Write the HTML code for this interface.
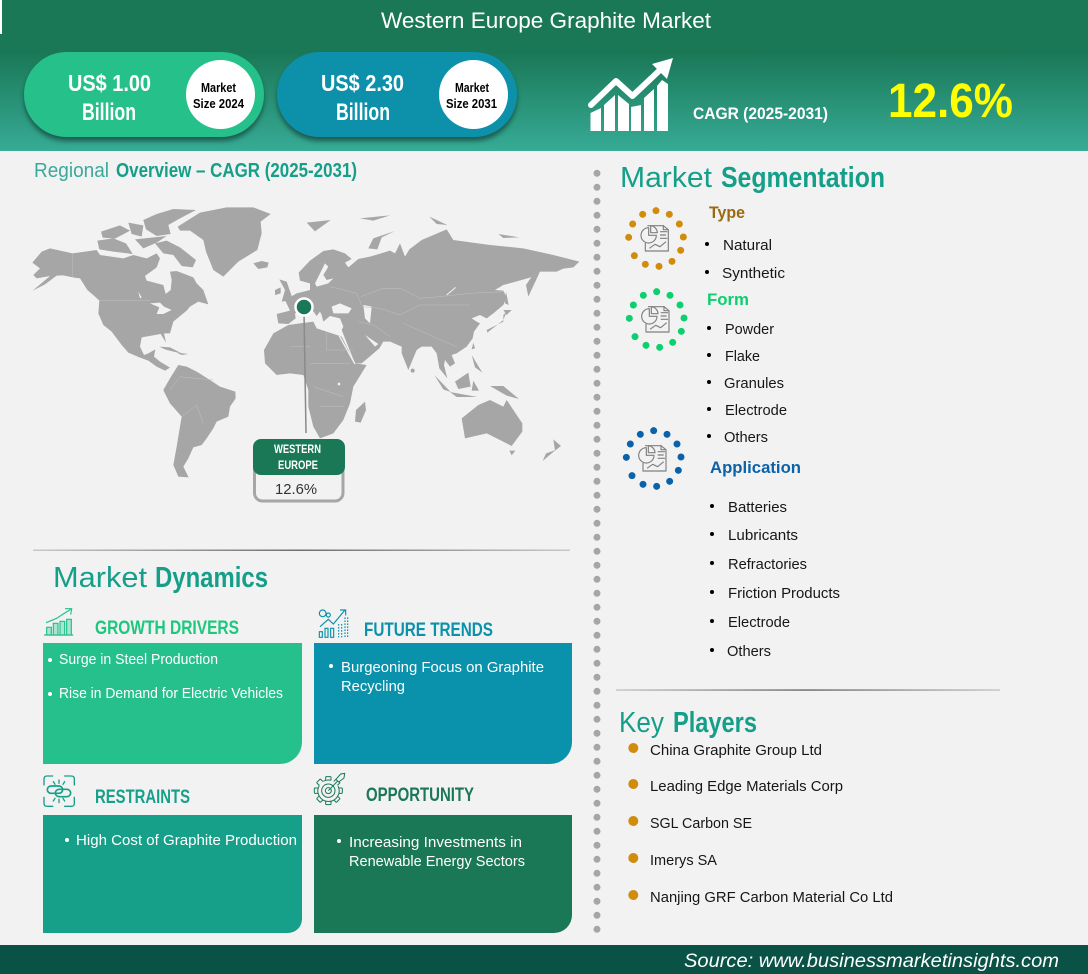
<!DOCTYPE html>
<html lang="en"><head><meta charset="utf-8"><title>Western Europe Graphite Market</title>
<style>
html,body{margin:0;padding:0;background:#f2f2f2;width:1088px;height:974px;overflow:hidden}
svg{display:block}
text{font-family:"Liberation Sans",sans-serif}
.b{font-weight:700}
.li{font-size:15px;fill:#161616}
.w{font-size:14.5px;fill:#fff}
.h{font-size:29px;fill:#159f89}
.ic{fill:none;stroke:#808080;stroke-width:3.5}
</style></head><body>
<svg width="1088" height="974" viewBox="0 0 1088 974" xmlns="http://www.w3.org/2000/svg">
<defs>
<linearGradient id="hd" x1="0" y1="0" x2="0" y2="1"><stop offset="0" stop-color="#1a7857"/><stop offset=".35" stop-color="#1a7857"/><stop offset="1" stop-color="#37ab96"/></linearGradient>
<linearGradient id="dv" x1="0" y1="0" x2="1" y2="0"><stop offset="0" stop-color="#c8c8c8"/><stop offset=".5" stop-color="#707070"/><stop offset="1" stop-color="#c8c8c8"/></linearGradient>
<filter id="sh" x="-10%" y="-10%" width="120%" height="130%"><feDropShadow dx="0" dy="4" stdDeviation="2.5" flood-color="#0a3a30" flood-opacity=".7"/></filter>
<g id="doc" class="ic" stroke-linejoin="round">
<path d="M112,92 H160 L175,104 V168 H106 V144"/><path d="M160,90 V104 H175"/>
<path d="M116,98 A23,23 0 1 0 139,121 H116 Z"/><path d="M122,92 A22,22 0 0 1 142,113 H122 Z"/>
<path d="M150,110 H172 M150,120 H168 M150,130 H172"/>
<path d="M118,160 L135,148 L150,155 L168,140"/>
</g>
<g id="ring"><circle cx="138" cy="47" r="10.500"/><circle cx="178" cy="58" r="10.500"/><circle cx="208" cy="87" r="10.500"/><circle cx="220" cy="126" r="10.500"/><circle cx="212" cy="166" r="10.500"/><circle cx="186" cy="199" r="10.500"/><circle cx="147" cy="214" r="10.500"/><circle cx="106" cy="208" r="10.500"/><circle cx="73" cy="182" r="10.500"/><circle cx="56" cy="127" r="10.500"/><circle cx="68" cy="87" r="10.500"/><circle cx="98" cy="58" r="10.500"/></g>
</defs>
<rect width="1088" height="974" fill="#f2f2f2"/>
<rect width="1088" height="151" fill="url(#hd)"/>
<rect x="0" y="0" width="2" height="34" fill="#fff"/>
<text x="381" y="28" font-size="22" fill="#fff" textLength="330" lengthAdjust="spacingAndGlyphs">Western Europe Graphite Market</text>

<rect x="24" y="52" width="240" height="85" rx="42.5" fill="#25c08b" filter="url(#sh)"/>
<circle cx="220.500" cy="94.500" r="34.500" fill="#fff"/>
<text class="b" x="68" y="91" font-size="23" fill="#fff" textLength="83" lengthAdjust="spacingAndGlyphs">US$ 1.00</text>
<text class="b" x="82" y="120" font-size="24" fill="#fff" textLength="54" lengthAdjust="spacingAndGlyphs">Billion</text>
<text class="b" x="201" y="92" font-size="12.500" fill="#000" textLength="35" lengthAdjust="spacingAndGlyphs">Market</text>
<text class="b" x="193" y="108" font-size="12.500" fill="#000" textLength="51" lengthAdjust="spacingAndGlyphs">Size 2024</text>

<rect x="277" y="52" width="240" height="85" rx="42.5" fill="#0a91ab" filter="url(#sh)"/>
<circle cx="473.500" cy="94.500" r="34.500" fill="#fff"/>
<text class="b" x="321" y="91" font-size="23" fill="#fff" textLength="83" lengthAdjust="spacingAndGlyphs">US$ 2.30</text>
<text class="b" x="336" y="120" font-size="24" fill="#fff" textLength="54" lengthAdjust="spacingAndGlyphs">Billion</text>
<text class="b" x="455" y="92" font-size="12.500" fill="#000" textLength="34" lengthAdjust="spacingAndGlyphs">Market</text>
<text class="b" x="446" y="108" font-size="12.500" fill="#000" textLength="51" lengthAdjust="spacingAndGlyphs">Size 2031</text>

<g fill="#fff">
<polygon points="590.500,113 601,108 601,131 590.500,131"/>
<polygon points="604,105 615,95 615,131 604,131"/>
<polygon points="618,95 629,104 629,131 618,131"/>
<polygon points="631,107 641,105 641,131 631,131"/>
<polygon points="644,98 654,89 654,131 644,131"/>
<polygon points="657,86 662,80 668,84 668,131 657,131"/>
<polygon points="673,58 652,64 667,79"/>
</g>
<polyline points="591,105 616,81 632.500,96 660,70" fill="none" stroke="#fff" stroke-width="6" stroke-linecap="round" stroke-linejoin="round"/>
<text class="b" x="693" y="119" font-size="17" fill="#fff" textLength="135" lengthAdjust="spacingAndGlyphs">CAGR (2025-2031)</text>
<text class="b" x="888" y="117" font-size="48" fill="#ffff00" textLength="125" lengthAdjust="spacingAndGlyphs">12.6%</text>

<text x="34" y="177" font-size="20" fill="#3aa99a" textLength="75" lengthAdjust="spacingAndGlyphs">Regional</text>
<text class="b" x="116" y="177" font-size="20" fill="#159f89" textLength="241" lengthAdjust="spacingAndGlyphs">Overview – CAGR (2025-2031)</text>

<!-- world map -->
<g fill="#a6a6a6">
<g transform="translate(0,190) scale(.33333)">
<path d="M98,302 L135,283 L170,257 L190,256 L218,262 L240,265 L262,300 L285,320 L298,332 L295,370 L310,405 L335,425 L350,445 L365,465 L385,488 L420,503 L445,512 L470,530 L495,542 L510,533 L480,515 L462,500 L466,478 L445,490 L432,495 L420,470 L425,442 L465,435 L482,432 L498,458 L492,430 L510,430 L520,395 L560,362 L570,350 L595,335 L625,343 L610,300 L590,280 L580,262 L530,243 L510,245 L515,270 L512,300 L497,312 L490,285 L440,272 L435,258 L470,232 L480,205 L470,190 L440,205 L400,195 L370,205 L300,195 L290,180 L218,190 L150,175 L125,185 L97,218 L120,235 L100,255 L110,265 L150,258 L130,275 Z"/>
<path d="M465,160 L500,152 L540,172 L588,210 L578,232 L545,228 L520,195 L490,190 Z"/>
<path d="M292,152 L340,145 L378,160 L398,192 L340,185 L298,178 Z"/>
<path d="M303,125 L360,106 L390,122 L345,146 L308,143 Z"/>
<path d="M385,98 L430,106 L425,140 L395,132 Z"/>
<path d="M430,90 L470,72 L520,57 L588,60 L540,85 L505,105 L512,132 L470,138 L438,118 Z"/>
<path d="M405,148 L500,138 L470,158 L430,175 Z"/>
<path d="M533,110 L600,68 L680,52 L760,52 L812,72 L782,95 L785,130 L772,180 L715,215 L670,260 L640,240 L618,185 L610,150 L570,122 L540,122 Z"/>
<path d="M760,220 L785,213 L806,218 L802,232 L775,237 Z"/>
<path d="M478,470 L510,472 L545,490 L520,485 L495,478 Z"/>
<path d="M530,488 L565,492 L545,495 Z"/>
<path d="M490,600 L510,565 L535,525 L560,530 L590,545 L630,570 L660,590 L706,605 L707,625 L690,650 L685,680 L650,695 L640,715 L620,745 L605,765 L580,772 L565,805 L550,830 L566,862 L535,860 L520,825 L530,770 L545,680 L510,640 L492,605 Z"/>
<g fill="#f2f2f2">
<path d="M450,340 L480,338 L492,350 L515,360 L490,372 L470,372 L478,352 Z"/>
<path d="M415,305 L425,322 L420,325 Z"/>
</g>
<path d="M218,190 V262 M298,332 H450 M545,680 L590,645 L610,700 M510,600 L540,560 L640,570" fill="none" stroke="#c0c0c0" stroke-width="1.500"/>
</g>
<g transform="translate(290,190) scale(.33333)">
<path d="M-15,330 L20,310 L60,300 L60,280 L30,272 L26,248 L60,212 L100,183 L130,178 L165,190 L185,207 L165,218 L175,232 L205,207 L240,200 L300,182 L315,190 L330,160 L345,200 L358,178 L395,150 L470,118 L490,150 L600,165 L700,175 L790,195 L868,215 L850,232 L820,236 L800,245 L750,245 L722,262 L695,270 L640,285 L615,300 L640,302 L650,322 L640,345 L610,370 L590,385 L570,375 L545,385 L560,395 L570,400 L552,425 L548,445 L530,470 L500,490 L485,495 L495,520 L480,530 L465,510 L462,525 L472,565 L448,535 L440,490 L425,470 L410,470 L395,470 L380,480 L355,540 L335,490 L335,470 L300,455 L280,455 L268,475 L215,520 L195,520 L165,445 L155,420 L160,410 L150,385 L120,378 L100,395 L95,375 L90,365 L80,378 L60,350 L35,360 L15,370 L17,385 L-5,402 L-35,400 L-40,372 L0,362 Z"/>
<path d="M-5,405 L30,400 L70,395 L80,415 L110,425 L155,440 L195,520 L230,525 L190,590 L180,640 L160,690 L130,730 L90,745 L70,710 L55,650 L55,600 L40,555 L0,550 L-40,555 L-75,520 L-78,480 L-50,430 Z"/>
<path d="M225,635 L228,660 L212,698 L195,695 L198,660 Z"/>
<path d="M-32,268 L-10,275 L5,318 L10,330 L-25,335 L-15,300 Z"/>
<path d="M-45,300 L-28,292 L-28,310 L-45,315 Z"/>
<path d="M590,420 L640,395 L640,375 L650,365 L640,390 L615,410 L592,428 Z"/>
<path d="M640,360 L665,360 L650,375 Z"/>
<path d="M648,305 L656,345 L645,340 Z"/>
<path d="M750,245 L715,320 L708,285 L725,260 Z"/>
<path d="M235,175 L250,145 L315,123 L275,142 L262,178 Z"/>
<path d="M50,98 L122,90 L75,124 Z"/>
<path d="M418,80 L472,105 L440,102 Z"/>
<path d="M625,132 L688,142 L640,144 Z"/>
<path d="M210,85 L300,76 L250,92 Z"/>
<circle cx="368" cy="542" r="6"/>
<path d="M550,458 L555,475 L545,478 Z"/>
<path d="M545,495 L577,548 L555,532 Z"/>
<path d="M433,555 L482,606 L460,598 Z"/>
<path d="M480,606 L562,621 L500,621 Z"/>
<path d="M495,575 L535,548 L542,590 L505,597 Z"/>
<path d="M550,572 L567,602 L545,602 Z"/>
<path d="M600,588 L640,588 L687,627 L650,617 Z"/>
<path d="M515,685 L565,645 L600,630 L640,650 L650,630 L697,700 L697,725 L665,768 L630,750 L590,730 L525,745 Z"/>
<path d="M658,782 L676,782 L665,796 Z"/>
<path d="M790,748 L813,768 L795,782 Z"/>
<path d="M797,780 L758,813 L768,790 Z"/>
<g fill="#f2f2f2">
<path d="M125,350 L150,340 L185,355 L175,370 L130,370 Z"/>
<path d="M220,345 L245,350 L240,400 L225,385 Z"/>
<path d="M75,280 L90,250 L105,220 L115,230 L100,255 L110,270 L130,265 L115,280 L80,290 Z"/>
<path d="M225,435 L255,470 L265,462 Z"/>
</g>
<path d="M470,315 L497,292" stroke="#f2f2f2" stroke-width="3"/>
<path d="M148,438 L195,522" stroke="#f2f2f2" stroke-width="4"/>
<circle cx="147" cy="582" r="4" fill="#f2f2f2"/>
<path d="M212,320 L280,295 L330,295 L390,325 L450,320 L540,310 L640,305 M215,350 L270,355 L330,375 L390,345 L540,345 M340,400 L430,440 L500,470 M205,395 L250,405 L300,440 M110,425 V480 L190,480 M60,520 L180,520 M90,650 L160,650 M70,590 L160,620 M60,470 H0 M120,290 L200,310 L215,345" fill="none" stroke="#c0c0c0" stroke-width="1.500"/>
</g>
</g>
<line x1="304" y1="312" x2="306" y2="433" stroke="#8a8a8a" stroke-width="1.500"/>
<circle cx="304" cy="307" r="8.500" fill="#1a7857" stroke="#fff" stroke-width="2.500"/>

<rect x="254.500" y="441" width="88.500" height="60" rx="8" fill="#f2f2f2" stroke="#a6a6a6" stroke-width="3"/>
<path d="M261,439 H337 A8,8 0 0 1 345,447 V467 A8,8 0 0 1 337,475 H261 A8,8 0 0 1 253,467 V447 A8,8 0 0 1 261,439 Z" fill="#1a7857"/>
<text class="b" x="274" y="453" font-size="12" fill="#fff" textLength="47" lengthAdjust="spacingAndGlyphs">WESTERN</text>
<text class="b" x="278" y="469" font-size="12" fill="#fff" textLength="40" lengthAdjust="spacingAndGlyphs">EUROPE</text>
<text x="275" y="494" font-size="15" fill="#333" textLength="42" lengthAdjust="spacingAndGlyphs">12.6%</text>

<rect x="33" y="549.500" width="537" height="1.500" fill="url(#dv)"/>
<text class="h" x="53" y="587" textLength="94" lengthAdjust="spacingAndGlyphs">Market</text>
<text class="h b" x="155" y="587" textLength="113" lengthAdjust="spacingAndGlyphs">Dynamics</text>

<!-- separator dots -->
<line x1="597" y1="173.300" x2="597" y2="930" stroke="#a6a6a6" stroke-width="7" stroke-linecap="round" stroke-dasharray="0 14"/>

<text class="h" x="620" y="187" textLength="92" lengthAdjust="spacingAndGlyphs">Market</text>
<text class="h b" x="721" y="187" textLength="164" lengthAdjust="spacingAndGlyphs">Segmentation</text>

<!-- segmentation icons -->
<g transform="translate(610,195) scale(.33333)">
<use href="#ring" fill="#d08c0a"/><use href="#doc"/>
<g transform="translate(2,243)"><use href="#ring" fill="#0ccf6f"/><use href="#doc"/></g>
<g transform="translate(-7,660)"><use href="#ring" fill="#0b62a8"/><use href="#doc"/></g>
</g>

<text class="b" x="709" y="218" font-size="17" fill="#9a6a10" textLength="36" lengthAdjust="spacingAndGlyphs">Type</text>
<text class="b" x="707" y="305" font-size="17" fill="#0ccf6f" textLength="42" lengthAdjust="spacingAndGlyphs">Form</text>
<text class="b" x="710" y="473" font-size="17" fill="#0b62a8" textLength="91" lengthAdjust="spacingAndGlyphs">Application</text>

<g fill="#000">
<circle cx="707" cy="244" r="2"/><circle cx="707" cy="272" r="2"/>
<circle cx="709" cy="328" r="2"/><circle cx="709" cy="355" r="2"/><circle cx="709" cy="382" r="2"/><circle cx="709" cy="409" r="2"/><circle cx="709" cy="436" r="2"/>
<circle cx="712" cy="506" r="2"/><circle cx="712" cy="534" r="2"/><circle cx="712" cy="563" r="2"/><circle cx="712" cy="592" r="2"/><circle cx="712" cy="621" r="2"/><circle cx="712" cy="650" r="2"/>
</g>
<text class="li" x="723" y="250" textLength="49" lengthAdjust="spacingAndGlyphs">Natural</text>
<text class="li" x="722" y="278" textLength="63" lengthAdjust="spacingAndGlyphs">Synthetic</text>
<text class="li" x="725" y="334" textLength="49" lengthAdjust="spacingAndGlyphs">Powder</text>
<text class="li" x="725" y="361" textLength="35" lengthAdjust="spacingAndGlyphs">Flake</text>
<text class="li" x="724" y="388" textLength="60" lengthAdjust="spacingAndGlyphs">Granules</text>
<text class="li" x="725" y="415" textLength="62" lengthAdjust="spacingAndGlyphs">Electrode</text>
<text class="li" x="724" y="442" textLength="44" lengthAdjust="spacingAndGlyphs">Others</text>
<text class="li" x="728" y="512" textLength="59" lengthAdjust="spacingAndGlyphs">Batteries</text>
<text class="li" x="728" y="540" textLength="70" lengthAdjust="spacingAndGlyphs">Lubricants</text>
<text class="li" x="728" y="569" textLength="79" lengthAdjust="spacingAndGlyphs">Refractories</text>
<text class="li" x="728" y="598" textLength="112" lengthAdjust="spacingAndGlyphs">Friction Products</text>
<text class="li" x="728" y="627" textLength="62" lengthAdjust="spacingAndGlyphs">Electrode</text>
<text class="li" x="727" y="656" textLength="44" lengthAdjust="spacingAndGlyphs">Others</text>

<rect x="616" y="689.300" width="384" height="1.500" fill="url(#dv)"/>
<text class="h" x="619" y="732" textLength="45" lengthAdjust="spacingAndGlyphs">Key</text>
<text class="h b" x="673" y="732" textLength="84" lengthAdjust="spacingAndGlyphs">Players</text>
<g fill="#d08c0a"><circle cx="633.300" cy="748" r="5"/><circle cx="633.300" cy="784" r="5"/><circle cx="633.300" cy="821" r="5"/><circle cx="633.300" cy="858" r="5"/><circle cx="633.300" cy="895" r="5"/></g>
<text class="li" x="650" y="755" textLength="172" lengthAdjust="spacingAndGlyphs">China Graphite Group Ltd</text>
<text class="li" x="650" y="791" textLength="193" lengthAdjust="spacingAndGlyphs">Leading Edge Materials Corp</text>
<text class="li" x="650" y="828" textLength="102" lengthAdjust="spacingAndGlyphs">SGL Carbon SE</text>
<text class="li" x="650" y="865" textLength="67" lengthAdjust="spacingAndGlyphs">Imerys SA</text>
<text class="li" x="650" y="902" textLength="243" lengthAdjust="spacingAndGlyphs">Nanjing GRF Carbon Material Co Ltd</text>

<!-- dynamics cards -->
<path d="M43,643 H302 V742 A22,22 0 0 1 280,764 H43 Z" fill="#25c08b"/>
<path d="M314,643 H572 V742 A22,22 0 0 1 550,764 H314 Z" fill="#0a91ab"/>
<path d="M43,815 H302 V919 A14,14 0 0 1 288,933 H43 Z" fill="#16a08a"/>
<path d="M314,815 H572 V915 A18,18 0 0 1 554,933 H314 Z" fill="#1a7857"/>

<text class="b" x="95" y="634" font-size="19" fill="#1cc77e" textLength="144" lengthAdjust="spacingAndGlyphs">GROWTH DRIVERS</text>
<text class="b" x="364" y="636" font-size="19" fill="#0a91ab" textLength="129" lengthAdjust="spacingAndGlyphs">FUTURE TRENDS</text>
<text class="b" x="95" y="803" font-size="19" fill="#16a08a" textLength="95" lengthAdjust="spacingAndGlyphs">RESTRAINTS</text>
<text class="b" x="366" y="801" font-size="19" fill="#1a7857" textLength="108" lengthAdjust="spacingAndGlyphs">OPPORTUNITY</text>

<g fill="#fff"><circle cx="50" cy="660" r="2"/><circle cx="50" cy="694" r="2"/><circle cx="331" cy="666" r="2"/><circle cx="67" cy="840" r="2"/><circle cx="339" cy="841" r="2"/></g>
<text class="w" x="59" y="664" textLength="159" lengthAdjust="spacingAndGlyphs">Surge in Steel Production</text>
<text class="w" x="59" y="698" textLength="224" lengthAdjust="spacingAndGlyphs">Rise in Demand for Electric Vehicles</text>
<text class="w" x="341" y="672" textLength="203" lengthAdjust="spacingAndGlyphs">Burgeoning Focus on Graphite</text>
<text class="w" x="341" y="691" textLength="64" lengthAdjust="spacingAndGlyphs">Recycling</text>
<text class="w" x="76" y="845" textLength="221" lengthAdjust="spacingAndGlyphs">High Cost of Graphite Production</text>
<text class="w" x="349" y="847" textLength="173" lengthAdjust="spacingAndGlyphs">Increasing Investments in</text>
<text class="w" x="349" y="866" textLength="176" lengthAdjust="spacingAndGlyphs">Renewable Energy Sectors</text>

<!-- growth icon -->
<g transform="translate(30,600) scale(.33333)" fill="none" stroke="#25c08b" stroke-width="3.500">
<path d="M42,105 H130"/>
<path d="M50,82 h14 v23 h-14z M70,70 h14 v35 h-14z M90,64 h14 v41 h-14z M110,58 h14 v47 h-14z" fill="#a8e6cf"/>
<path d="M48,68 L80,55 L95,45 L122,28"/><path d="M105,26 L125,26 L122,44"/>
</g>
<!-- future trends icon -->
<g transform="translate(300,600) scale(.33333)" fill="none" stroke="#0a91ab" stroke-width="3.500">
<circle cx="68" cy="40" r="10"/><circle cx="85" cy="45" r="6"/>
<path d="M60,80 L85,58 L100,72 L135,30"/><path d="M120,30 H137 V46"/>
<path d="M58,95 h9 v17 h-9z M75,85 h9 v27 h-9z M92,85 h9 v27 h-9z"/>
<path d="M116,72 V112 M125,72 V112 M135,52 V112 M143,52 V112" stroke-dasharray="5 4"/>
</g>
<!-- restraints icon -->
<g transform="translate(30,600) scale(.33333)" fill="none" stroke="#16a08a" stroke-width="4" stroke-linecap="round">
<path d="M42,555 V537 Q42,528 51,528 H68 M104,528 H124 Q133,528 133,537 V555 M133,592 V610 Q133,619 124,619 H104 M68,619 H51 Q42,619 42,610 V592"/>
<rect x="52" y="558" width="46" height="22" rx="11" stroke-width="5"/><rect x="76" y="568" width="46" height="22" rx="11" stroke-width="5"/>
<path d="M87,540 V550 M70,545 L75,553 M104,545 L99,553 M87,598 V608 M70,603 L75,595 M104,603 L99,595"/>
</g>
<!-- opportunity icon -->
<g transform="translate(300,600) scale(.33333)" fill="#f2f2f2" stroke="#1a7857" stroke-width="3">
<rect x="77" y="530" width="16" height="12" rx="2"/>
<rect x="77" y="530" width="16" height="12" rx="2" transform="rotate(45 85 572)"/>
<rect x="77" y="530" width="16" height="12" rx="2" transform="rotate(90 85 572)"/>
<rect x="77" y="530" width="16" height="12" rx="2" transform="rotate(135 85 572)"/>
<rect x="77" y="530" width="16" height="12" rx="2" transform="rotate(180 85 572)"/>
<rect x="77" y="530" width="16" height="12" rx="2" transform="rotate(225 85 572)"/>
<rect x="77" y="530" width="16" height="12" rx="2" transform="rotate(270 85 572)"/>
<rect x="77" y="530" width="16" height="12" rx="2" transform="rotate(315 85 572)"/>
<circle cx="85" cy="572" r="32" stroke="none"/>
<path d="M58,556 A32,32 0 1 0 114,558" fill="none"/><path d="M70,544 A32,32 0 0 1 92,541" fill="none"/>
<circle cx="85" cy="572" r="20" fill="none"/><circle cx="85" cy="572" r="9" fill="none"/>
<path d="M85,572 L116,540" fill="none"/><path d="M108,538 L122,522 L134,520 L132,534 L116,546 Z"/>
</g>

<rect x="0" y="945" width="1088" height="29" fill="#0a5246"/>
<text x="684" y="967" font-size="19.500" font-style="italic" fill="#fff" textLength="375" lengthAdjust="spacingAndGlyphs">Source: www.businessmarketinsights.com</text>
</svg>
</body></html>
